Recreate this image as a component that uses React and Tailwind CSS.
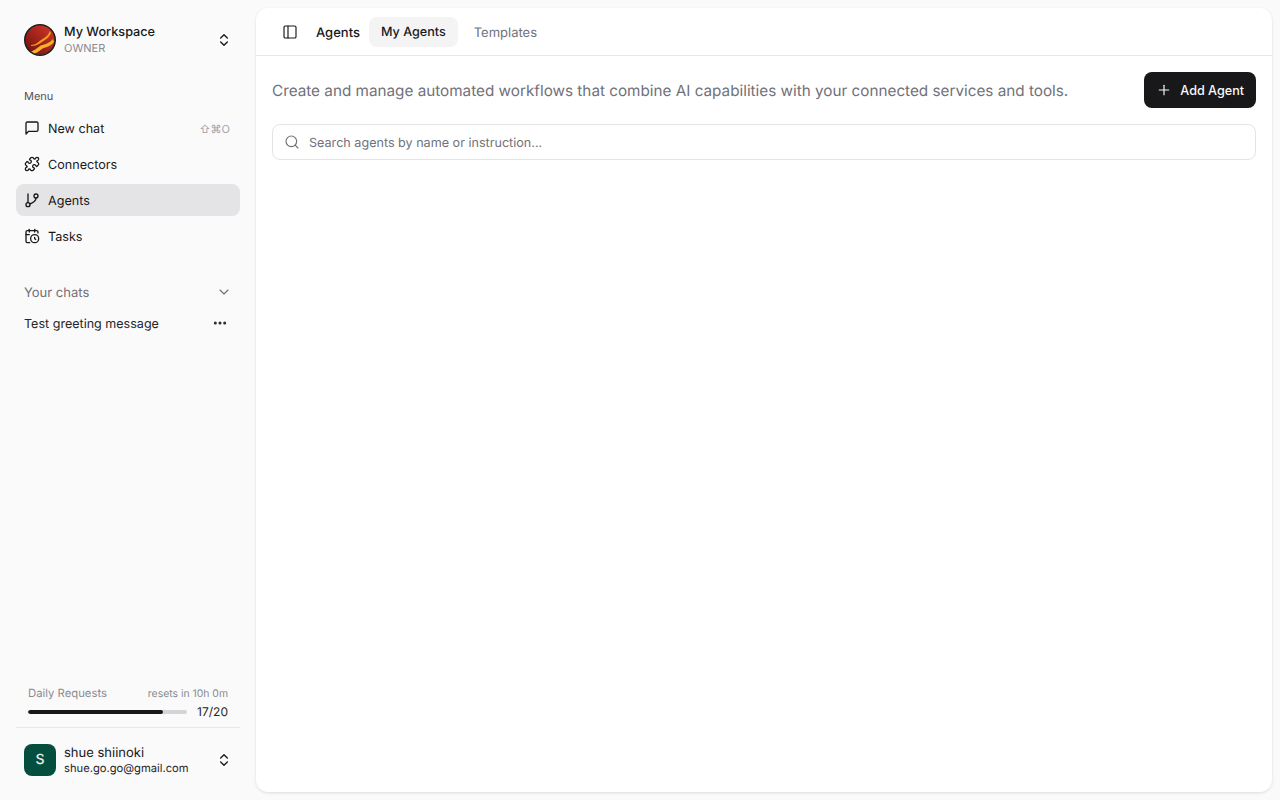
import React from 'react';
import {
  Puzzle,
  CalendarClock,
  ChevronDown,
  ChevronsUpDown,
  Ellipsis,
  PanelLeft,
  Plus,
  Search,
} from 'lucide-react';

const ChatIcon = ({ className }) => (
  <svg viewBox="0 0 24 24" fill="none" stroke="currentColor" strokeWidth="2" strokeLinecap="round" strokeLinejoin="round" className={className}>
    <path d="M21 15a2 2 0 0 1-2 2H7l-4 4V5a2 2 0 0 1 2-2h14a2 2 0 0 1 2 2z" />
  </svg>
);

const AgentsIcon = ({ className }) => (
  <svg viewBox="0 0 24 24" fill="none" stroke="currentColor" strokeWidth="2" strokeLinecap="round" strokeLinejoin="round" className={className}>
    <circle cx="6" cy="19" r="3" />
    <path d="M6 16V3" />
    <circle cx="18" cy="6" r="3" />
    <path d="M18 9c0 5-4 7-9.5 9" />
  </svg>
);

const WorkspaceLogo = () => (
  <svg viewBox="0 0 32 32" className="w-8 h-8 shrink-0">
    <defs>
      <linearGradient id="ball" x1="0" y1="1" x2="1" y2="0">
        <stop offset="0" stopColor="#6d0f0c" />
        <stop offset="1" stopColor="#d8392a" />
      </linearGradient>
      <clipPath id="disc">
        <circle cx="16" cy="16" r="15" />
      </clipPath>
    </defs>
    <circle cx="16" cy="16" r="15" fill="url(#ball)" />
    <g clipPath="url(#disc)">
      <path d="M5 28c5-1 8-4 11-6s8-1 13-7l1 3c-4 5-9 5-12 7s-6 5-10 5z" fill="#f7b02a" />
      <path d="M7 21c5 0 7-3 10-5s6-3 9-9l1 2c-2 5-6 7-9 9s-6 4-11 4z" fill="#f39a1f" />
    </g>
    <circle cx="16" cy="16" r="15.2" fill="none" stroke="#1c1c1c" strokeWidth="1.6" />
  </svg>
);

const NavItem = ({ icon: Icon, label, shortcut, active }) => (
  <div className={`h-8 px-2 flex items-center gap-2 rounded-lg text-[12.6px] text-[#18181b] ${active ? 'bg-[#e4e4e7]' : ''}`}>
    <Icon className="w-4 h-4 shrink-0" strokeWidth={2} />
    <span className="flex-1 pt-[5px]">{label}</span>
    {shortcut && <span className="text-[11px] text-[#a1a1aa] mr-[2px] pt-[2px]">{shortcut}</span>}
  </div>
);

export default function App() {
  return (
    <div className="h-screen w-screen flex bg-[#fafafa] overflow-hidden text-[#18181b] font-['Inter',sans-serif] [text-rendering:geometricPrecision]">
      {/* Sidebar */}
      <aside className="w-[256px] shrink-0 flex flex-col px-4 pt-2">
        <div className="h-12 mt-2 px-2 flex items-center gap-2">
          <WorkspaceLogo />
          <div className="flex-1 min-w-0 leading-4">
            <div className="text-[12.7px] font-medium leading-4 pt-[1px]">My Workspace</div>
            <div className="text-[11px] text-[#8a8a8f] leading-4 mt-[-1px]">OWNER</div>
          </div>
          <ChevronsUpDown className="w-4 h-4" strokeWidth={2} />
        </div>

        <div className="mt-4 px-2 h-8 flex items-center text-[11px] text-[#52525b]">Menu</div>
        <div className="flex flex-col gap-1">
          <NavItem icon={ChatIcon} label="New chat" shortcut="⇧⌘O" />
          <NavItem icon={Puzzle} label="Connectors" />
          <NavItem icon={AgentsIcon} label="Agents" active />
          <NavItem icon={CalendarClock} label="Tasks" />
        </div>

        <div className="mt-[24px] px-2 h-8 flex items-center justify-between text-[13px] text-[#71717a]">
          <span className="pt-[3px]">Your chats</span>
          <ChevronDown className="w-4 h-4" strokeWidth={1.75} />
        </div>
        <div className="pl-2 pr-3 h-8 mt-[-1px] flex items-center justify-between text-[12.55px] text-[#27272a]">
          <span className="pt-[5px]">Test greeting message</span>
          <Ellipsis className="w-4 h-4" strokeWidth={2.5} />
        </div>

        <div className="mt-auto px-3 pb-[6px]">
          <div className="flex items-center justify-between">
            <span className="text-[11.3px] text-[#8a8a8f]">Daily Requests</span>
            <span className="text-[10.4px] text-[#8a8a8f]">resets in 10h 0m</span>
          </div>
          <div className="mt-[1px] flex items-center gap-[10px]">
            <div className="flex-1 h-1 rounded-full bg-[#d4d4d8] overflow-hidden">
              <div className="h-full w-[85%] bg-[#18181b] rounded-full" />
            </div>
            <span className="text-[12px] text-[#27272a]">17/20</span>
          </div>
        </div>
        <div className="border-t border-[#e7e7e9] h-[73px] px-2 pb-[8px] flex items-center gap-2">
          <div className="w-8 h-8 rounded-lg bg-[#044e3f] text-[#e6f0ed] flex items-center justify-center text-sm font-medium shrink-0">S</div>
          <div className="flex-1 min-w-0">
            <div className="text-[13px] leading-4 pt-[1px]">shue shiinoki</div>
            <div className="text-[11.2px] leading-4 text-[#27272a] mt-[-1px]">shue.go.go@gmail.com</div>
          </div>
          <ChevronsUpDown className="w-4 h-4" strokeWidth={2} />
        </div>
      </aside>

      {/* Main card */}
      <main className="flex-1 my-2 mr-2 bg-white rounded-xl shadow-[0_1px_3px_rgba(0,0,0,0.12)] flex flex-col min-w-0">
        <header className="h-12 px-4 flex items-center border-b border-[#e7e7e9] shrink-0">
          <div className="w-9 flex justify-center">
            <PanelLeft className="w-4 h-4" strokeWidth={1.75} />
          </div>
          <span className="ml-2 text-[13px] font-[450] text-[#18181b] pt-[4px]">Agents</span>
          <div className="ml-[9px] h-[30px] px-3 rounded-lg bg-[#f4f4f5] flex items-center text-[12.6px] font-[450] pt-[4px]">My Agents</div>
          <div className="ml-1 h-[30px] px-3 flex items-center text-[13px] text-[#71717a] pt-[4px]">Templates</div>
        </header>

        <div className="px-4 pt-4 flex flex-col gap-4">
          <div className="flex items-center justify-between">
            <p className="text-[15.27px] text-[#71717a] pt-[2px]">
              Create and manage automated workflows that combine AI capabilities with your connected services and tools.
            </p>
            <button className="h-9 px-3 rounded-lg bg-[#18181b] text-[#fafafa] flex items-center gap-2 text-[12.6px] font-[450] shrink-0">
              <Plus className="w-4 h-4" strokeWidth={1.75} />
              <span className="pt-[3px]">Add Agent</span>
            </button>
          </div>
          <div className="h-9 pl-[11px] pr-3 rounded-lg border border-[#e4e4e7] flex items-center gap-[9px]">
            <Search className="w-4 h-4 text-[#71717a]" strokeWidth={1.75} />
            <span className="text-[12.6px] text-[#71717a] pt-[5px]">Search agents by name or instruction...</span>
          </div>
        </div>
      </main>
    </div>
  );
}
